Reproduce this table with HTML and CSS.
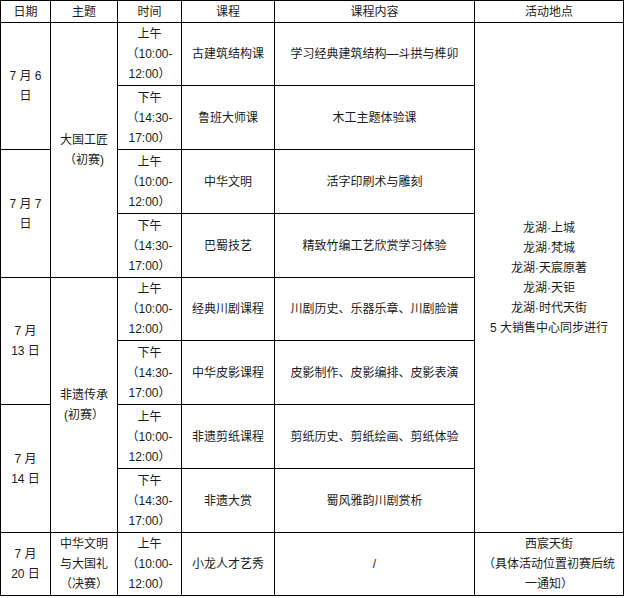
FILE: index.html
```html
<!DOCTYPE html>
<html lang="zh-CN">
<head>
<meta charset="utf-8">
<link rel="stylesheet" href="styles.css">
</head>
<body>
<table class="schedule">
  <colgroup>
    <col class="c-date">
    <col class="c-theme">
    <col class="c-time">
    <col class="c-course">
    <col class="c-content">
    <col class="c-place">
  </colgroup>
  <thead>
    <tr class="head">
      <th>日期</th>
      <th>主题</th>
      <th>时间</th>
      <th>课程</th>
      <th>课程内容</th>
      <th>活动地点</th>
    </tr>
  </thead>
  <tbody>
    <tr class="short">
      <td rowspan="2">7 月 6<br>日</td>
      <td rowspan="4">大国工匠<br>（初赛)</td>
      <td>上午<br>（10:00-<br>12:00）</td>
      <td>古建筑结构课</td>
      <td>学习经典建筑结构—斗拱与榫卯</td>
      <td rowspan="8">龙湖·上城<br>龙湖·梵城<br>龙湖·天宸原著<br>龙湖·天钜<br>龙湖·时代天街<br>5 大销售中心同步进行</td>
    </tr>
    <tr>
      <td>下午<br>（14:30-<br>17:00）</td>
      <td>鲁班大师课</td>
      <td>木工主题体验课</td>
    </tr>
    <tr>
      <td rowspan="2">7 月 7<br>日</td>
      <td>上午<br>（10:00-<br>12:00）</td>
      <td>中华文明</td>
      <td>活字印刷术与雕刻</td>
    </tr>
    <tr>
      <td>下午<br>（14:30-<br>17:00）</td>
      <td>巴蜀技艺</td>
      <td>精致竹编工艺欣赏学习体验</td>
    </tr>
    <tr class="short">
      <td rowspan="2">7 月<br>13 日</td>
      <td rowspan="4">非遗传承<br>(初赛）</td>
      <td>上午<br>（10:00-<br>12:00）</td>
      <td>经典川剧课程</td>
      <td>川剧历史、乐器乐章、川剧脸谱</td>
    </tr>
    <tr>
      <td>下午<br>（14:30-<br>17:00）</td>
      <td>中华皮影课程</td>
      <td>皮影制作、皮影编排、皮影表演</td>
    </tr>
    <tr>
      <td rowspan="2">7 月<br>14 日</td>
      <td>上午<br>（10:00-<br>12:00）</td>
      <td>非遗剪纸课程</td>
      <td>剪纸历史、剪纸绘画、剪纸体验</td>
    </tr>
    <tr>
      <td>下午<br>（14:30-<br>17:00）</td>
      <td>非遗大赏</td>
      <td>蜀风雅韵川剧赏析</td>
    </tr>
    <tr class="short">
      <td>7 月<br>20 日</td>
      <td>中华文明<br>与大国礼<br>（决赛）</td>
      <td>上午<br>（10:00-<br>12:00）</td>
      <td>小龙人才艺秀</td>
      <td>/</td>
      <td>西宸天街<br>（具体活动位置初赛后统<br>一通知）</td>
    </tr>
  </tbody>
</table>
</body>
</html>
```

FILE: styles.css
```css
html, body {
  margin: 0;
  padding: 0;
  background: #fff;
}
.schedule {
  border-collapse: collapse;
  table-layout: fixed;
  width: 623px;
  font-family: "Liberation Sans", "Noto Sans CJK SC", sans-serif;
  font-size: 12px;
  line-height: 20px;
  color: #1c1c1c;
}
.c-date { width: 50px; }
.c-theme { width: 67px; }
.c-time { width: 64px; }
.c-course { width: 93px; }
.c-content { width: 200px; }
.c-place { width: 149px; }
.schedule th,
.schedule td {
  border: 1px solid #000;
  padding: 0;
  text-align: center;
  vertical-align: middle;
  font-weight: normal;
}
.schedule .head th {
  height: 21px;
}
.schedule tbody td {
  height: 63px;
}
.schedule tbody .short td {
  height: 62px;
}
```
